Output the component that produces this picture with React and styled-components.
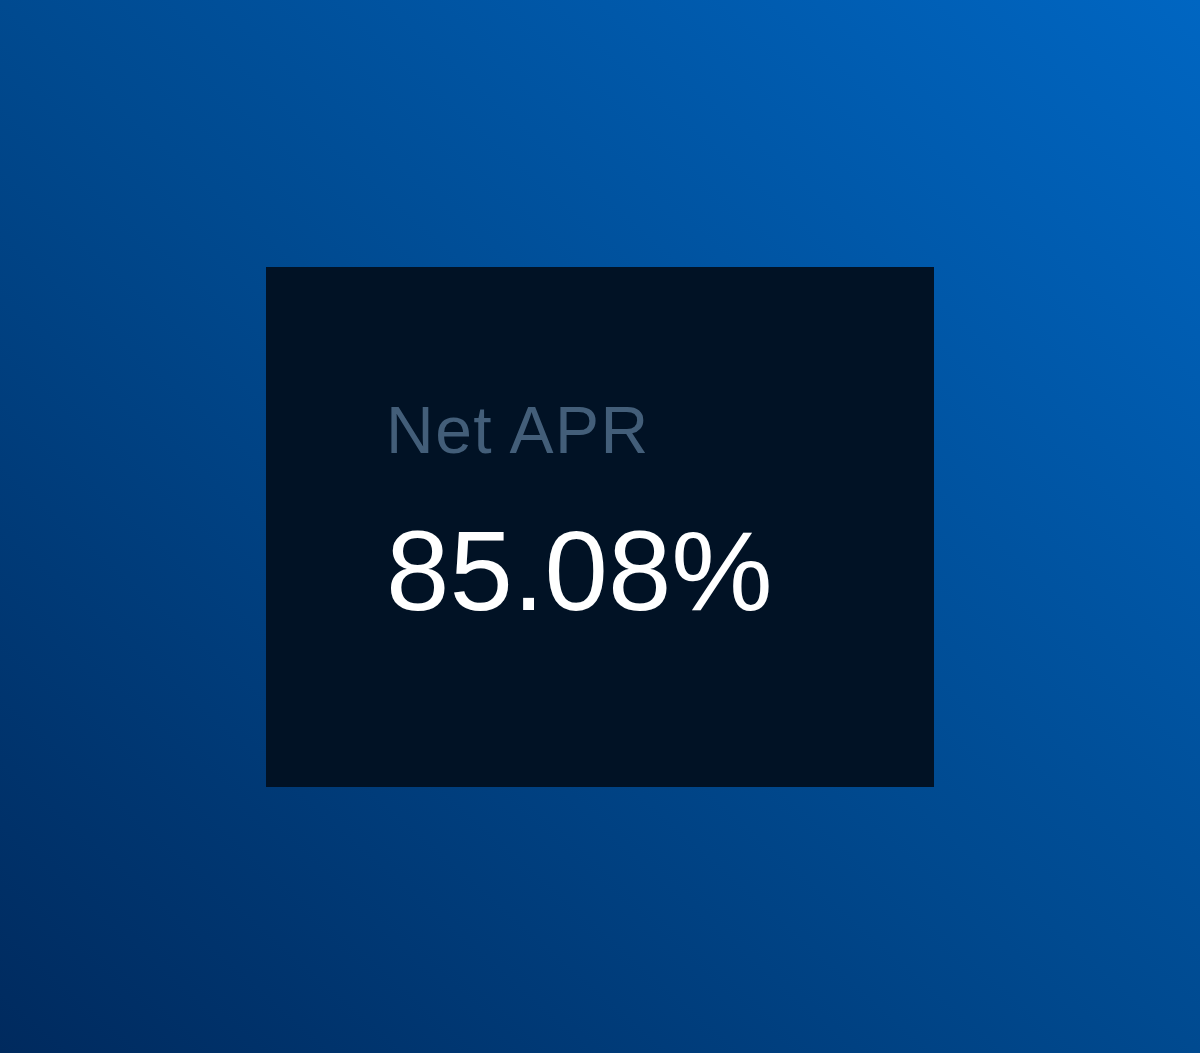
import styled, { createGlobalStyle } from 'styled-components'

const GlobalStyle = createGlobalStyle`
  html, body {
    margin: 0;
    padding: 0;
  }
  body {
    font-family: "Liberation Sans", Arial, sans-serif;
  }
`

export default function App() {
  return (
    <>
      <GlobalStyle />
      <Page>
        <StatCard label="Net APR" value="85.08%" />
      </Page>
    </>
  )
}

const StatCard = ({ label, value }) => (
  <Card>
    <Label>{label}</Label>
    <Value>{value}</Value>
  </Card>
)

const Page = styled.div`
  width: 1200px;
  height: 1053px;
  display: flex;
  align-items: center;
  justify-content: center;
  background: linear-gradient(to bottom left, #0066c2 0%, #004a90 50%, #002a5e 100%);
`

const Card = styled.div`
  width: 668px;
  height: 520px;
  box-sizing: border-box;
  padding: 130px 0 0 120px;
  background: #011225;
  display: flex;
  flex-direction: column;
  gap: 51px;
`

const Label = styled.div`
  font-size: 66px;
  line-height: 1;
  letter-spacing: 1.5px;
  color: #435e79;
`

const Value = styled.div`
  font-size: 114px;
  line-height: 1;
  color: #ffffff;
`
